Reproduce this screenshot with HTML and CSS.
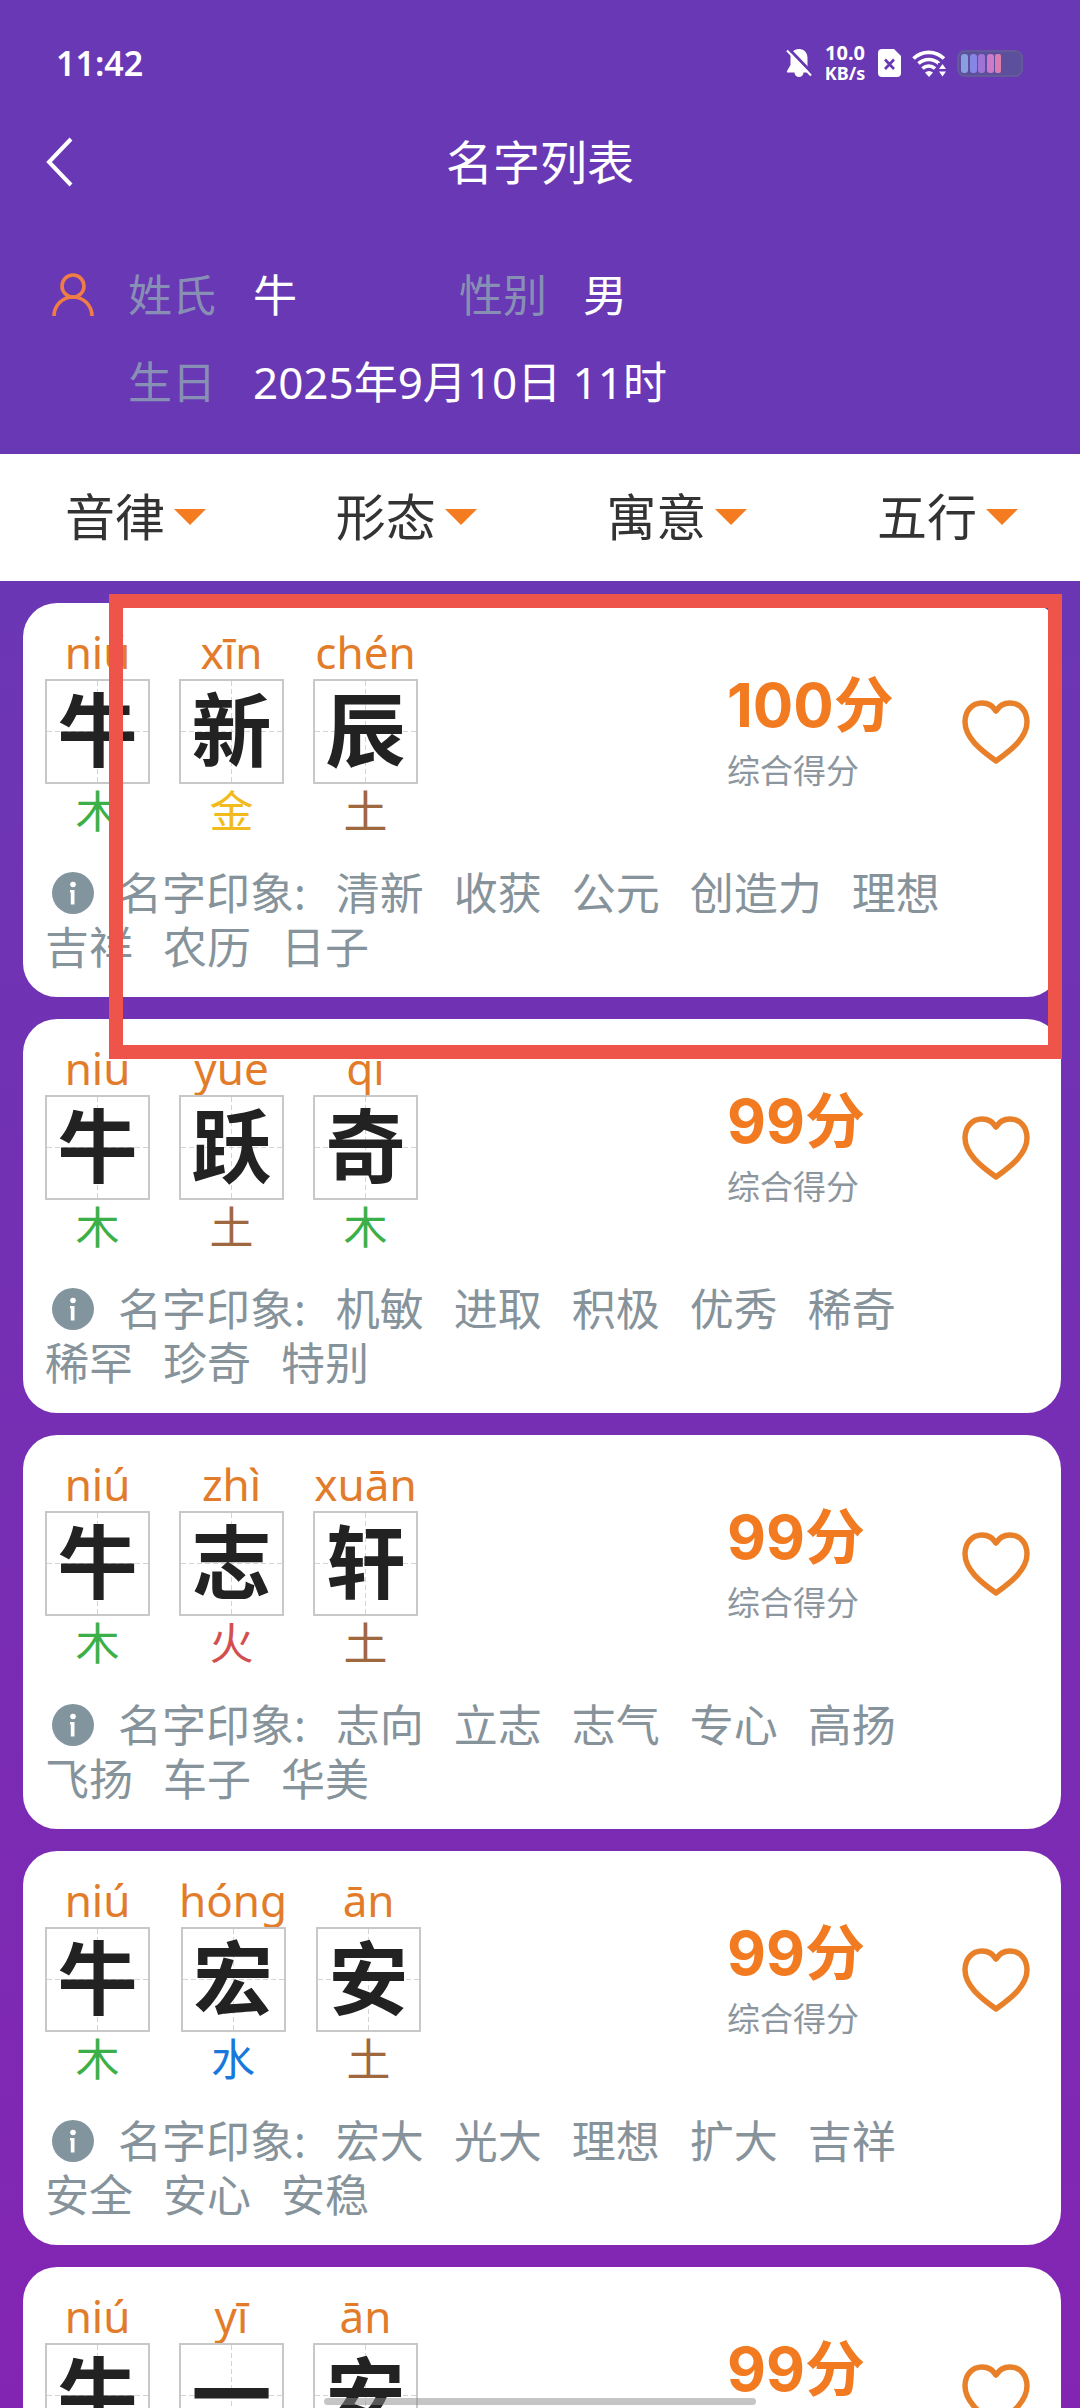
FILE: index.html
```html
<!DOCTYPE html>
<html lang="zh-CN">
<head>
<meta charset="utf-8">
<meta name="viewport" content="width=device-width, initial-scale=1">
<title>名字列表</title>
<link rel="stylesheet" href="styles.css">
</head>
<body>
<svg class="sprite" aria-hidden="true">
  <symbol id="i-heart" viewBox="0 0 68 64">
    <path d="M34 61C22 52 3 39 3 22C3 11 10 3 20 3C26 3 31 6 34 11C37 6 42 3 48 3C58 3 65 11 65 22C65 39 46 52 34 61Z" fill="none" stroke="currentColor" stroke-width="5.500" stroke-linejoin="round"/>
  </symbol>
  <symbol id="i-info" viewBox="0 0 42 42">
    <circle cx="21" cy="21" r="21" fill="currentColor"/>
    <circle cx="21" cy="12.500" r="2.800" fill="#fff"/>
    <path d="M18 18H22.500V32.500H18.800V20.500H18Z" fill="#fff"/>
  </symbol>
</svg>
<div class="app">
  <header class="header">
    <div class="status">
      <span class="clock">11:42</span>
      <div class="status-icons">
        <svg class="bell" width="26" height="30" viewBox="0 0 26 30">
          <path d="M13 1C7.500 1 4.500 5 4.500 10V17L1 23V24.500H8.500A4.500 4.500 0 0 0 17.500 24.500H23L21.500 20V10C21.500 5 18.500 1 13 1Z" fill="#fff"/>
          <path d="M2 0L26 25" stroke="#6938b4" stroke-width="3"/>
          <path d="M1 2.500L25 27.500" stroke="#fff" stroke-width="2"/>
        </svg>
        <span class="speed"><span class="speed-num">10.0</span><span>KB/s</span></span>
        <svg class="sim" width="23" height="28" viewBox="0 0 23 28">
          <path d="M4 0H16L23 7V24A4 4 0 0 1 19 28H4A4 4 0 0 1 0 24V4A4 4 0 0 1 4 0Z" fill="#fff"/>
          <path d="M7 10.500L16 20M16 10.500L7 20" stroke="#6938b4" stroke-width="2.600"/>
        </svg>
        <svg class="wifi" width="34" height="28" viewBox="0 0 34 28">
          <g fill="none" stroke="#fff" stroke-width="3.600">
            <path d="M1.500 9.500A22 22 0 0 1 32 9.500"/>
            <path d="M6.500 14.500A15 15 0 0 1 27 14.500"/>
            <path d="M10.500 19.500A9 9 0 0 1 23 19.500"/>
          </g>
          <path d="M13 23.500Q17 20.500 21 23.500L17 28Z" fill="#fff"/>
          <path d="M26 14H34V28H26Z" fill="#6938b4"/>
          <path d="M30.500 15L34 20H27ZM30.500 27.500L27 22.500H34Z" fill="#fff"/>
        </svg>
        <svg class="battery" width="66" height="27" viewBox="0 0 66 27">
          <rect x="1" y="1" width="64" height="25" rx="7" fill="#5c4f9c" stroke="#64599a" stroke-width="2"/>
          <rect x="4" y="4" width="7" height="19" rx="3" fill="#8a9fe0"/>
          <rect x="13" y="4" width="7" height="19" rx="3" fill="#8686e6"/>
          <rect x="21" y="4" width="7" height="19" rx="3" fill="#9f74d6"/>
          <rect x="30" y="4" width="7" height="19" rx="3" fill="#cd7acb"/>
          <rect x="38" y="4" width="6" height="19" rx="2" fill="#dd7cae"/>
        </svg>
      </div>
    </div>
    <nav class="nav">
      <button class="back" type="button" aria-label="返回">
        <svg width="28" height="50" viewBox="0 0 28 50"><path d="M25 2L3 25L25 48" fill="none" stroke="#fff" stroke-width="4"/></svg>
      </button>
      <h1 class="title">名字列表</h1>
    </nav>
    <dl class="profile">
      <svg class="person" width="42" height="44" viewBox="0 0 42 44">
        <g fill="none" stroke="#f07d45" stroke-width="3.600"><circle cx="21" cy="13" r="11"/><path d="M2 43A19 19 0 0 1 40 43"/></g>
      </svg>
      <dt>姓氏</dt><dd>牛</dd><dt>性别</dt><dd>男</dd>
      <dt class="birth">生日</dt><dd class="date">2025年9月10日 11时</dd>
    </dl>
  </header>

  <div class="filters">
    <button class="filter" type="button">音律</button>
    <button class="filter" type="button">形态</button>
    <button class="filter" type="button">寓意</button>
    <button class="filter" type="button">五行</button>
  </div>

  <main class="list">
    <article class="card">
      <div class="summary">
        <div class="char"><span class="pinyin">niú</span><span class="glyph">牛</span><span class="wood">木</span></div>
        <div class="char"><span class="pinyin">xīn</span><span class="glyph">新</span><span class="metal">金</span></div>
        <div class="char"><span class="pinyin">chén</span><span class="glyph">辰</span><span class="earth">土</span></div>
        <div class="score"><strong>100分</strong><span>综合得分</span></div>
        <button class="like" type="button" aria-label="收藏"><svg width="68" height="64"><use href="#i-heart"/></svg></button>
      </div>
      <div class="words"><span class="label"><svg width="42" height="42"><use href="#i-info"/></svg>名字印象:</span><span>清新</span><span>收获</span><span>公元</span><span>创造力</span><span>理想</span><span>吉祥</span><span>农历</span><span>日子</span></div>
    </article>

    <article class="card">
      <div class="summary">
        <div class="char"><span class="pinyin">niú</span><span class="glyph">牛</span><span class="wood">木</span></div>
        <div class="char"><span class="pinyin">yuè</span><span class="glyph">跃</span><span class="earth">土</span></div>
        <div class="char"><span class="pinyin">qí</span><span class="glyph">奇</span><span class="wood">木</span></div>
        <div class="score"><strong>99分</strong><span>综合得分</span></div>
        <button class="like" type="button" aria-label="收藏"><svg width="68" height="64"><use href="#i-heart"/></svg></button>
      </div>
      <div class="words"><span class="label"><svg width="42" height="42"><use href="#i-info"/></svg>名字印象:</span><span>机敏</span><span>进取</span><span>积极</span><span>优秀</span><span>稀奇</span><span>稀罕</span><span>珍奇</span><span>特别</span></div>
    </article>

    <article class="card">
      <div class="summary">
        <div class="char"><span class="pinyin">niú</span><span class="glyph">牛</span><span class="wood">木</span></div>
        <div class="char"><span class="pinyin">zhì</span><span class="glyph">志</span><span class="fire">火</span></div>
        <div class="char"><span class="pinyin">xuān</span><span class="glyph">轩</span><span class="earth">土</span></div>
        <div class="score"><strong>99分</strong><span>综合得分</span></div>
        <button class="like" type="button" aria-label="收藏"><svg width="68" height="64"><use href="#i-heart"/></svg></button>
      </div>
      <div class="words"><span class="label"><svg width="42" height="42"><use href="#i-info"/></svg>名字印象:</span><span>志向</span><span>立志</span><span>志气</span><span>专心</span><span>高扬</span><span>飞扬</span><span>车子</span><span>华美</span></div>
    </article>

    <article class="card">
      <div class="summary">
        <div class="char"><span class="pinyin">niú</span><span class="glyph">牛</span><span class="wood">木</span></div>
        <div class="char"><span class="pinyin">hóng</span><span class="glyph">宏</span><span class="water">水</span></div>
        <div class="char"><span class="pinyin">ān</span><span class="glyph">安</span><span class="earth">土</span></div>
        <div class="score"><strong>99分</strong><span>综合得分</span></div>
        <button class="like" type="button" aria-label="收藏"><svg width="68" height="64"><use href="#i-heart"/></svg></button>
      </div>
      <div class="words"><span class="label"><svg width="42" height="42"><use href="#i-info"/></svg>名字印象:</span><span>宏大</span><span>光大</span><span>理想</span><span>扩大</span><span>吉祥</span><span>安全</span><span>安心</span><span>安稳</span></div>
    </article>

    <article class="card">
      <div class="summary">
        <div class="char"><span class="pinyin">niú</span><span class="glyph">牛</span></div>
        <div class="char"><span class="pinyin">yī</span><span class="glyph">一</span></div>
        <div class="char"><span class="pinyin">ān</span><span class="glyph">安</span></div>
        <div class="score"><strong>99分</strong></div>
        <button class="like" type="button" aria-label="收藏"><svg width="68" height="64"><use href="#i-heart"/></svg></button>
      </div>
    </article>
    <div class="highlight"></div>
  </main>
  <div class="home-bar"></div>
</div>
</body>
</html>
```
FILE: styles.css
```css
* { box-sizing: border-box; margin: 0; padding: 0; }

body {
  font-family: "Noto Sans", "Noto Sans CJK SC", sans-serif;
  font-size: 44px;
  line-height: 54px;
  color: #333;
}

button { background: none; border: 0; font: inherit; color: inherit; cursor: pointer; }
svg { display: block; flex: none; }
.sprite { position: absolute; width: 0; height: 0; }

.app {
  position: relative;
  display: flex;
  flex-direction: column;
  height: 100vh;
  overflow: hidden;
  background: linear-gradient(#6938b4 0, #6938b4 454px, #8325b3 100%);
}

/* Header */
.header { color: #fff; padding-bottom: 45px; }

.status {
  display: flex;
  align-items: center;
  justify-content: space-between;
  height: 126px;
  padding: 0 57px 0 56px;
}
.clock { font-size: 34px; font-weight: 600; }
.status-icons { display: flex; align-items: center; }
.bell { margin-right: 11px; }
.speed {
  display: flex;
  flex-direction: column;
  align-items: center;
  width: 44px;
  font-size: 18px;
  line-height: 20px;
  font-weight: 700;
}
.speed-num { font-size: 20px; }
.sim { margin: 0 11px; }
.battery { margin-left: 11px; }

.nav {
  display: grid;
  grid-template-columns: 100px 1fr 100px;
  align-items: center;
  height: 72px;
}
.back { justify-self: end; width: 56px; height: 60px; padding-left: 2px; }
.title { font-size: 47px; font-weight: 400; text-align: center; }

.profile {
  display: grid;
  grid-template-columns: 76px 125px 206px 124px 1fr;
  row-gap: 33px;
  padding: 70px 0 0 52px;
}
.profile dt { color: #888fb4; }
.person { align-self: center; }
.birth { grid-column: 2; }
.date { grid-column: 3 / -1; }

/* Filters */
.filters {
  display: flex;
  justify-content: space-between;
  height: 127px;
  flex: none;
  padding: 0 62px 2px 65px;
  background: #fff;
}
.filter { display: flex; align-items: center; gap: 9px; font-size: 50px; }
.filter::after {
  content: "";
  border: 16px solid transparent;
  border-top-color: #f47b20;
  border-bottom: 0;
}

/* Name list */
.list {
  position: relative;
  flex: 1;
  min-height: 0;
  display: flex;
  flex-direction: column;
  gap: 22px;
  padding: 22px 19px 22px 23px;
  overflow-y: auto;
  scrollbar-width: none;
}
.card {
  flex: none;
  padding: 22px 31px 23px 22px;
  border-radius: 34px;
  background: #fff;
}
.summary { display: flex; gap: 29px; min-height: 213px; }
.char {
  display: flex;
  flex-direction: column;
  align-items: center;
  min-width: 105px;
}
.pinyin { color: #e27c2a; }
.glyph {
  width: 105px;
  height: 105px;
  border: 2px solid #c8c8c8;
  background:
    repeating-linear-gradient(90deg, #d4d4d4 0 5px, transparent 5px 8px) 0 50% / 100% 1px no-repeat,
    repeating-linear-gradient(#d4d4d4 0 5px, transparent 5px 8px) 50% 0 / 1px 100% no-repeat;
  color: #222;
  font-family: "KaiTi", "STKaiti", "Noto Sans CJK SC", sans-serif;
  font-size: 80px;
  font-weight: 700;
  line-height: 88px;
  text-align: center;
}
.wood { color: #3cb048; }
.metal { color: #f2bb1d; }
.earth { color: #a0683f; }
.fire { color: #d24f4f; }
.water { color: #1a78dc; }

.score {
  width: 206px;
  margin-left: auto;
  padding-top: 40px;
  display: flex;
  flex-direction: column;
  gap: 4px;
}
.score strong {
  color: #f27a20;
  font-family: "Inter", "Noto Sans CJK SC", sans-serif;
  font-size: 60px;
  line-height: 80px;
}
.score span { color: #8b969e; font-size: 33px; line-height: 44px; }
.like { align-self: center; color: #e8802a; }

.words {
  display: flex;
  flex-wrap: wrap;
  column-gap: 30px;
  margin-top: 28px;
  padding-right: 20px;
  color: #86939b;
}
.label { display: flex; align-items: center; }
.label svg { margin: 0 24px 0 7px; color: #82959f; }

.highlight {
  position: absolute;
  top: 13px;
  left: 109px;
  right: 18px;
  height: 465px;
  border: 14px solid #ef544b;
  pointer-events: none;
}
.home-bar {
  position: absolute;
  bottom: 3px;
  left: 30%;
  right: 30%;
  height: 7px;
  border-radius: 4px;
  background: rgba(140, 140, 140, 0.5);
}
```
